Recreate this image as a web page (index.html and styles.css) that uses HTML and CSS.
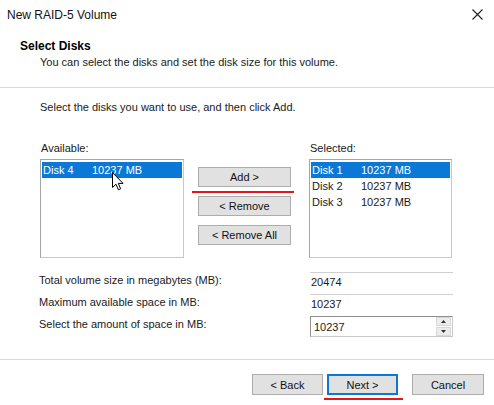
FILE: index.html
```html
<!DOCTYPE html>
<html>
<head>
<meta charset="utf-8">
<link rel="stylesheet" href="styles.css">
</head>
<body>
<div class="dialog">
  <div class="titlebar">
    <span class="title">New RAID-5 Volume</span>
    <svg class="close" width="11" height="11" viewBox="0 0 11 11"><path d="M0.5 0.5L10.5 10.5M10.5 0.5L0.5 10.5" stroke="#222" stroke-width="1.1" fill="none"/></svg>
  </div>
  <div class="header">
    <div class="h-title">Select Disks</div>
    <div class="h-sub">You can select the disks and set the disk size for this volume.</div>
  </div>
  <div class="body">
    <div class="instr">Select the disks you want to use, and then click Add.</div>
    <div class="lists">
      <div class="col">
        <div class="label">Available:</div>
        <div class="listbox">
          <div class="row sel"><span class="c1">Disk 4</span><span>10237 MB</span></div>
          <svg class="cursor" width="12" height="19" viewBox="0 0 12 19"><path d="M0.5 0.5V15.5L4 12.2L6.4 17.8L8.6 16.8L6.3 11.4H11L0.5 0.5Z" fill="#fff" stroke="#000" stroke-width="1" stroke-linejoin="round"/></svg>
        </div>
      </div>
      <div class="btns">
        <div class="btn-wrap">
          <div class="btn">Add &gt;</div>
          <div class="mark mark-add"></div>
        </div>
        <div class="btn">&lt; Remove</div>
        <div class="btn">&lt; Remove All</div>
      </div>
      <div class="col col-right">
        <div class="label">Selected:</div>
        <div class="listbox">
          <div class="row sel"><span class="c1">Disk 1</span><span>10237 MB</span></div>
          <div class="row"><span class="c1">Disk 2</span><span>10237 MB</span></div>
          <div class="row"><span class="c1">Disk 3</span><span>10237 MB</span></div>
        </div>
      </div>
    </div>
    <div class="fields">
      <div class="field-row">
        <span class="f-label">Total volume size in megabytes (MB):</span>
        <div class="ro">20474</div>
      </div>
      <div class="field-row">
        <span class="f-label">Maximum available space in MB:</span>
        <div class="ro">10237</div>
      </div>
      <div class="field-row">
        <span class="f-label">Select the amount of space in MB:</span>
        <div class="spin">
          <span class="spin-val">10237</span>
          <div class="spin-btns">
            <div class="sb"><svg width="5" height="3" viewBox="0 0 5 3"><path d="M2.5 0L5 3H0Z" fill="#333"/></svg></div>
            <div class="sb"><svg width="5" height="3" viewBox="0 0 5 3"><path d="M0 0H5L2.5 3Z" fill="#333"/></svg></div>
          </div>
        </div>
      </div>
    </div>
  </div>
  <div class="footer">
    <div class="btn fbtn">&lt; Back</div>
    <div class="btn-wrap">
      <div class="btn fbtn default">Next &gt;</div>
      <div class="mark mark-next"></div>
    </div>
    <div class="btn fbtn cancel">Cancel</div>
  </div>
</div>
</body>
</html>
```

FILE: styles.css
```css
html, body {
  margin: 0;
  padding: 0;
  background: #fff;
}
body {
  font-family: "Liberation Sans", Arial, sans-serif;
  font-size: 11px;
  color: #1a1a1a;
  width: 494px;
  height: 405px;
  overflow: hidden;
}
.dialog {
  display: flex;
  flex-direction: column;
  width: 494px;
  height: 405px;
}
.titlebar {
  height: 30px;
  display: flex;
  align-items: center;
  justify-content: space-between;
  padding: 0 11px 0 7px;
  box-sizing: border-box;
}
.title {
  font-size: 12px;
  color: #111;
}
.close {
  display: block;
  margin-top: -2px;
}
.header {
  padding: 9px 0 18px 20px;
  border-bottom: 1px solid #d9d9d9;
}
.h-title {
  font-weight: bold;
  font-size: 12px;
  line-height: 14px;
  color: #000;
}
.h-sub {
  margin-top: 2px;
  padding-left: 20px;
  line-height: 14px;
}
.body {
  padding: 12px 0 0 40px;
  flex: 1;
}
.instr {
  line-height: 14px;
}
.lists {
  margin-top: 27px;
  display: flex;
  align-items: flex-start;
}
.col {
  width: 144px;
  display: flex;
  flex-direction: column;
}
.col-right {
  width: 143px;
  margin-left: 18px;
}
.label {
  line-height: 14px;
  margin-bottom: 4px;
  padding-left: 1px;
}
.listbox {
  position: relative;
  height: 95px;
  border: 1px solid #8c8c8c;
  border-color: #a5a5a5 #c8c8c8 #c8c8c8 #a5a5a5;
  padding-top: 2px;
  box-sizing: content-box;
}
.row {
  display: flex;
  height: 16px;
  line-height: 16px;
  padding-left: 1px;
  margin: 0 1px;
  color: #1a1a1a;
}
.row.sel {
  background: #0a78d7;
  color: #fff;
}
.c1 {
  width: 49px;
}
.cursor {
  position: absolute;
  left: 71px;
  top: 12px;
}
.btns {
  width: 93px;
  margin-left: 14px;
  margin-top: 26px;
  display: flex;
  flex-direction: column;
  gap: 9px;
}
.btn-wrap {
  position: relative;
}
.btn {
  height: 20px;
  box-sizing: border-box;
  border: 1px solid #adadad;
  background: #e1e1e1;
  display: flex;
  align-items: center;
  justify-content: center;
  color: #111;
}
.mark {
  position: absolute;
  height: 2px;
  background: #e8141a;
}
.mark-add {
  left: -6px;
  right: -3px;
  top: 24px;
}
.fields {
  margin-top: 14px;
  display: flex;
  flex-direction: column;
  gap: 1px;
}
.field-row {
  display: flex;
  align-items: flex-start;
  height: 21px;
}
.f-label {
  width: 271px;
  margin-left: -1px;
  line-height: 14px;
  padding-top: 1px;
}
.ro {
  width: 143px;
  height: 21px;
  box-sizing: border-box;
  border-top: 1px solid #d0d0d0;
  padding: 2px 0 0 1px;
  line-height: 15px;
}
.spin {
  width: 143px;
  height: 21px;
  box-sizing: border-box;
  border: 1px solid #a0a0a0;
  border-color: #8f8f8f #c8c8c8 #c8c8c8 #8f8f8f;
  display: flex;
  align-items: center;
  justify-content: space-between;
  padding-left: 3px;
}
.spin-btns {
  width: 15px;
  height: 19px;
  display: flex;
  flex-direction: column;
  gap: 1px;
  padding-right: 1px;
}
.sb {
  flex: 1;
  background: #ececec;
  border: 1px solid #d8d8d8;
  display: flex;
  align-items: center;
  justify-content: center;
}
.sb svg {
  display: block;
}
.footer {
  height: 46px;
  border-top: 1px solid #d9d9d9;
  display: flex;
  justify-content: flex-end;
  align-items: flex-start;
  padding: 14px 10px 0 0;
  box-sizing: border-box;
  gap: 4px;
}
.fbtn {
  width: 71px;
  height: 21px;
}
.default {
  border: 2px solid #0a78d7;
}
.cancel {
  width: 72px;
  margin-left: 10px;
}
.mark-next {
  left: -3px;
  right: -5px;
  top: 24px;
}
```
